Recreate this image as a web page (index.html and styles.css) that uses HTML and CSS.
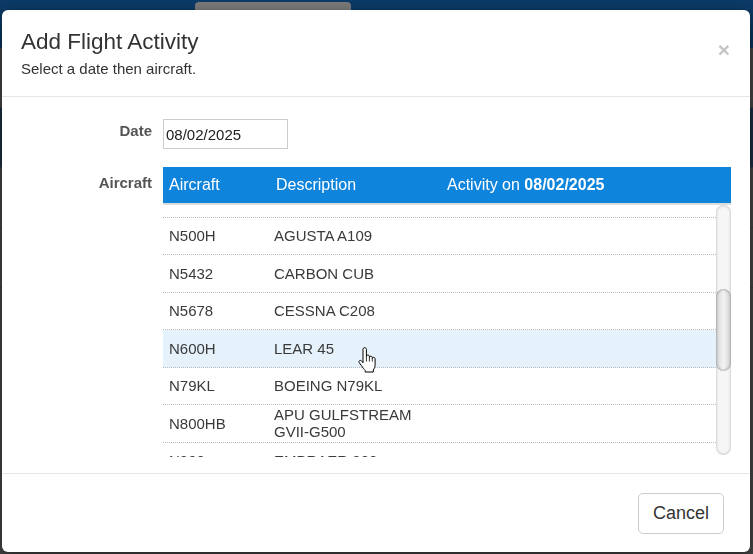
FILE: index.html
```html
<!DOCTYPE html>
<html lang="en">
<head>
  <meta charset="UTF-8" />
  <meta name="viewport" content="width=device-width, initial-scale=1.0"/>
  <title>Add Flight Activity</title>
  <link rel="stylesheet" href="styles.css">
</head>
<body>
  <div class="navbar">
    <div class="nav-tab"></div>
  </div>
  <div class="page">
    <div class="page-row"></div>
    <div class="page-row dark"></div>
    <div class="page-row"></div>
    <div class="page-row"></div>
  </div>

  <div class="modal">
    <div class="modal-header">
      <div class="modal-titles">
        <h4 class="modal-title">Add Flight Activity</h4>
        <div class="modal-subtitle">Select a date then aircraft.</div>
      </div>
      <button class="close" type="button">&times;</button>
    </div>

    <div class="modal-body">
      <label class="field-label" for="activityDate">Date</label>
      <div>
        <input id="activityDate" class="date-input" type="text" value="08/02/2025">
      </div>

      <div class="field-label field-label-table">Aircraft</div>
      <div class="aircraft-table">
        <div class="table-head">
          <div>Aircraft</div>
          <div>Description</div>
          <div>Activity on <b id="activityLabel">08/02/2025</b></div>
        </div>
        <div class="table-scroll">
          <div class="table-rows" id="aircraftRows"></div>
          <div class="scrollbar">
            <div class="scrollbar-thumb"></div>
          </div>
        </div>
      </div>
    </div>

    <div class="modal-footer">
      <button class="btn" type="button">Cancel</button>
    </div>
  </div>

  <svg class="cursor" width="18" height="26" viewBox="0 0 18 26">
    <path d="M5 2.5 C5 1.3 5.7 0.7 6.7 0.7 C7.7 0.7 8.4 1.3 8.4 2.5 V9.5 C8.4 8.6 9.1 8.1 9.9 8.1 C10.8 8.1 11.4 8.7 11.4 9.6 V10.5 C11.4 9.7 12 9.2 12.8 9.2 C13.7 9.2 14.3 9.8 14.3 10.7 V11.5 C14.3 10.8 14.9 10.3 15.6 10.3 C16.5 10.3 17.1 11 17.1 11.8 V17.5 C17.1 20 16.3 21.5 15.3 23 V25 H7.2 V23.3 C6 22.3 4.8 20.5 3.6 18.8 L1.3 15.7 C0.7 14.8 0.9 14 1.6 13.6 C2.4 13.2 3.3 13.5 3.9 14.3 L5 15.8 Z" fill="#fff" stroke="#000" stroke-width="1" stroke-linejoin="round"/>
    <path d="M8.4 9.5 V14.5 M11.4 10.5 V14.5 M14.3 11.5 V14.5" stroke="#000" stroke-width="0.8" fill="none"/>
  </svg>

  <script>
    const aircraft = [
      ['N1001', 'BELL 407'],
      ['N125XL', 'HAWKER 800XP'],
      ['N208CX', 'CESSNA CARAVAN'],
      ['N210SP', 'CESSNA P210'],
      ['N350BH', 'KING AIR 350'],
      ['N407GX', 'BELL 407GX'],
      ['N46TB', 'PILATUS PC-12'],
      ['N500H', 'AGUSTA A109'],
      ['N5432', 'CARBON CUB'],
      ['N5678', 'CESSNA C208'],
      ['N600H', 'LEAR 45'],
      ['N79KL', 'BOEING N79KL'],
      ['N800HB', 'APU GULFSTREAM GVII-G500'],
      ['N900', 'EMBRAER 300'],
      ['N910EA', 'PHENOM 100'],
      ['N925DC', 'CITATION CJ3'],
      ['N940RS', 'ROBINSON R44'],
      ['N955MK', 'BEECH BARON 58'],
      ['N970TT', 'PIPER PA-46'],
      ['N985JW', 'CIRRUS SR22'],
      ['N999AV', 'DIAMOND DA42']
    ];

    const rows = document.getElementById('aircraftRows');
    rows.innerHTML = aircraft.map(([tail, desc]) =>
      `<div class="table-row${tail === 'N600H' ? ' hover' : ''}"><div>${tail}</div><div>${desc}</div><div></div></div>`
    ).join('');
    rows.scrollTop = 250;
  </script>
</body>
</html>
```

FILE: styles.css
```css
:root {
  --font-family: "Liberation Sans", Arial, Helvetica, sans-serif;
  --text-color: #333;
  --label-color: #555;
  --header-blue: #0f84dc;
  --row-hover: #e5f1fb;
  --line-color: #e5e5e5;
}

* {
  box-sizing: border-box;
}

html, body {
  margin: 0;
  padding: 0;
  height: 100%;
  overflow: hidden;
  background-color: #464646;
  font-family: var(--font-family);
  color: var(--text-color);
}

/* page behind the dialog (dimmed) */
.navbar {
  height: 48px;
  background: linear-gradient(to bottom, #0c3b68, #0a3459);
  padding-top: 2px;
}

.nav-tab {
  width: 156px;
  height: 12px;
  margin-left: 195px;
  background-color: #7a7a7a;
  border-radius: 4px 4px 0 0;
}

.page-row {
  height: 60px;
  border-bottom: 1px solid #3a3a3a;
}

.page-row.dark {
  background-color: #1f2f44;
}

/* dialog */
.modal {
  position: fixed;
  top: 10px;
  left: 2px;
  width: 748px;
  height: 542px;
  background-color: #fff;
  border-radius: 6px;
  box-shadow: 0 5px 15px rgba(0, 0, 0, 0.5);
  display: flex;
  flex-direction: column;
}

.modal-header {
  display: flex;
  align-items: flex-start;
  padding: 20px 20px 18px 19px;
  border-bottom: 1px solid var(--line-color);
}

.modal-titles {
  flex: 1;
}

.modal-title {
  margin: 0;
  font-size: 22.5px;
  line-height: 24px;
  font-weight: 400;
  color: #333;
}

.modal-subtitle {
  margin-top: 6px;
  font-size: 15px;
  line-height: 18px;
  color: #333;
}

.close {
  margin-top: 9px;
  padding: 0;
  border: none;
  background: none;
  font-family: var(--font-family);
  font-size: 21px;
  line-height: 21px;
  font-weight: 700;
  color: #c4c4c4;
  cursor: pointer;
}

.modal-body {
  flex: 1;
  display: grid;
  grid-template-columns: 131px 1fr;
  column-gap: 11px;
  row-gap: 18px;
  align-content: start;
  padding: 22px 19px 16px 19px;
}

.field-label {
  text-align: right;
  font-size: 15px;
  line-height: 20px;
  font-weight: 700;
  color: var(--label-color);
  padding-top: 2px;
}

.field-label-table {
  padding-top: 6px;
}

.date-input {
  width: 125px;
  height: 30px;
  padding: 0 2px;
  border: 1px solid #ccc;
  font-family: var(--font-family);
  font-size: 15px;
  color: #222;
}

.table-head {
  display: grid;
  grid-template-columns: 107px 171px 1fr;
  height: 38px;
  line-height: 36px;
  background-color: var(--header-blue);
  border-bottom: 2px solid #dcdcdc;
  color: #fff;
  font-size: 16px;
}

.table-head > div,
.table-row > div {
  padding-left: 6px;
}

.table-scroll {
  display: flex;
  align-items: flex-start;
  height: 252px;
}

.table-rows {
  flex: 1;
  height: 252px;
  overflow: hidden;
}

.table-row {
  display: grid;
  grid-template-columns: 105px 171px 1fr;
  align-items: center;
  height: 37.5px;
  border-bottom: 1px dotted #bcbcbc;
  font-size: 15px;
  line-height: 17px;
  color: #3a3a3a;
}

.table-row > div:nth-child(2) {
  padding-right: 6px;
}

.table-row.hover {
  background-color: var(--row-hover);
}

.scrollbar {
  width: 15px;
  height: 250px;
  border-radius: 8px;
  background-color: #f6f6f6;
  box-shadow: inset 0 0 3px rgba(0, 0, 0, 0.3);
  display: flex;
  flex-direction: column;
}

.scrollbar-thumb {
  margin-top: 84px;
  height: 82px;
  border-radius: 8px;
  background: linear-gradient(to right, #d6d6d6, #f2f2f2 50%, #d6d6d6);
  box-shadow: inset 0 0 3px rgba(0, 0, 0, 0.45);
}

.modal-footer {
  display: flex;
  justify-content: flex-end;
  padding: 19px 26px 0 0;
  border-top: 1px solid var(--line-color);
  height: 79px;
}

.btn {
  height: 41px;
  padding: 0 14px;
  background-color: #fff;
  border: 1px solid #ccc;
  border-radius: 5px;
  font-family: var(--font-family);
  font-size: 18px;
  color: #333;
  cursor: pointer;
}

.cursor {
  position: fixed;
  left: 358px;
  top: 347px;
}
```
